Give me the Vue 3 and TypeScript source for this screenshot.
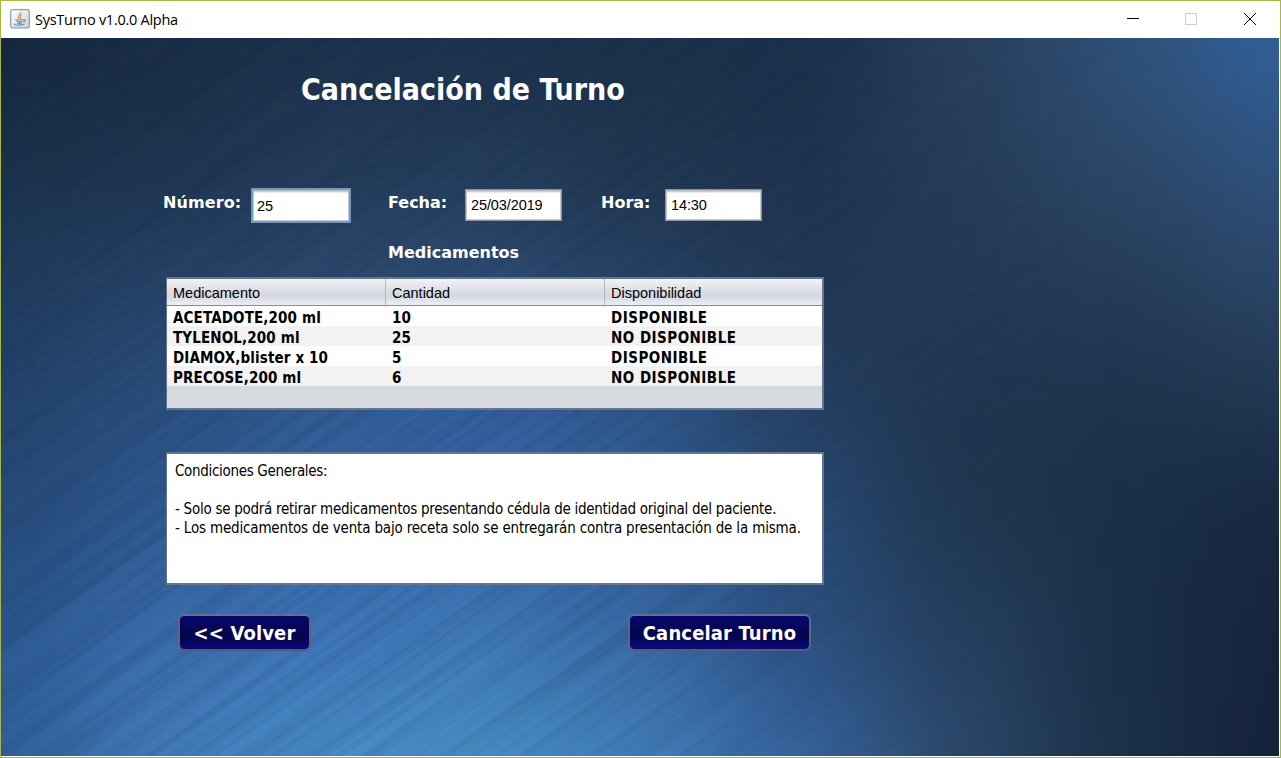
<script setup lang="ts">
interface Medicine {
  name: string
  amount: number
  status: string
}

const medicines: Medicine[] = [
  { name: 'ACETADOTE,200 ml', amount: 10, status: 'DISPONIBLE' },
  { name: 'TYLENOL,200 ml', amount: 25, status: 'NO DISPONIBLE' },
  { name: 'DIAMOX,blister x 10', amount: 5, status: 'DISPONIBLE' },
  { name: 'PRECOSE,200 ml', amount: 6, status: 'NO DISPONIBLE' },
]

// Colour samples of the backdrop, softened into one another by a blur.
const backdrop: string[][] = [
  ['#15263c', '#1a2c45', '#1c304a', '#1b304b', '#1b3049', '#1b2f4b', '#293f5c', '#2e5079', '#32619c'],
  ['#1a3049', '#1d334d', '#223a57', '#233c58', '#20364f', '#1d324d', '#263d5a', '#2c4868', '#2e5280'],
  ['#203c5c', '#264265', '#2c4768', '#2e4a70', '#273f60', '#213854', '#233955', '#253c58', '#2b4667'],
  ['#22426a', '#2a4e7c', '#305a90', '#3560a0', '#2f5688', '#263f60', '#1f3550', '#1c324d', '#213650'],
  ['#264a78', '#305b92', '#3768a8', '#3768ac', '#32609a', '#274a74', '#20374f', '#1a2e48', '#16273f'],
  ['#2b5890', '#3a6cad', '#3d74b8', '#3f79b6', '#3969a4', '#2b4f80', '#25405f', '#1b2e48', '#14243b'],
  ['#31609a', '#437dbb', '#4a8ec8', '#4a90c6', '#4280ba', '#3865a0', '#2b4868', '#1b2f49', '#14223a'],
]

const tiles = backdrop.flatMap((row, r) =>
  row.map((fill, c) => ({
    key: `${r}-${c}`,
    fill,
    x: c === 0 ? -300 : c * 160 - 80,
    y: r === 0 ? -300 : r * 120 - 60,
    w: c === 0 ? 381 : c === 8 ? 460 : 161,
    h: r === 0 ? 361 : r === 6 ? 400 : 121,
  })),
)
</script>

<template>
  <div class="window">
    <header class="titlebar">
      <svg class="app-icon" width="20" height="20" viewBox="0 0 20 20">
        <defs>
          <linearGradient id="tile" x1="0" y1="0" x2="1" y2="1">
            <stop offset="0" stop-color="#fff" />
            <stop offset="1" stop-color="#c9d3dd" />
          </linearGradient>
        </defs>
        <rect x=".7" y=".7" width="18.6" height="18.2" rx="2" fill="url(#tile)" stroke="#8ea2b3" stroke-width="1.3" />
        <path d="M10.6 3c.8 2-3.2 2.900-2.300 5 .3.800 1 1.200 1.300 2M12 5.500c-2.200 1.300-2.300 2-1.400 3.200.3.500 0 1-.4 1.500" fill="none" stroke="#e8995a" stroke-width="1.300" />
        <path d="M6 10.500c-1.500.700 6 .800 7.500 0M6.700 12.300c1.500.700 4.200.600 5.700 0M7.200 13.900c1.300.600 3.300.500 4.600 0M13.500 10.700c2.500-.5 2 2-.4 2.500M4.800 14.800c-2.800 1.300 6.500 2 9.600.2" fill="none" stroke="#6f8ea9" stroke-width="1.100" />
      </svg>
      <span class="app-name">SysTurno v1.0.0 Alpha</span>
      <svg class="controls" width="124" height="14" viewBox="0 0 124 14" fill="none" shape-rendering="crispEdges">
        <path d="M0 6.500h12" stroke="#000" />
        <rect x="58.500" y="1.500" width="11" height="11" stroke="#ccc" />
        <path d="M117 1l12 12M129 1l-12 12" stroke="#000" shape-rendering="auto" />
      </svg>
    </header>

    <main class="content">
      <svg class="backdrop" width="1278" height="718" viewBox="0 0 1278 718">
        <defs>
          <filter id="soften" filterUnits="userSpaceOnUse" x="-300" y="-300" width="1900" height="1400" color-interpolation-filters="sRGB">
            <feGaussianBlur stdDeviation="55" />
          </filter>
        </defs>
        <g filter="url(#soften)">
          <rect v-for="t in tiles" :key="t.key" :x="t.x" :y="t.y" :width="t.w" :height="t.h" :fill="t.fill" />
        </g>
      </svg>
      <div class="streak-mask">
        <svg class="streaks" width="1700" height="1500">
          <filter id="brushed" x="0" y="0" width="100%" height="100%" color-interpolation-filters="sRGB">
            <feTurbulence type="fractalNoise" baseFrequency="0.002 0.11" numOctaves="3" seed="7" />
            <feColorMatrix values="0 0 0 0 0.04  0 0 0 0 0.13  0 0 0 0 0.28  1.600 0 0 0 -0.62" />
          </filter>
          <rect width="1700" height="1500" filter="url(#brushed)" />
        </svg>
      </div>

      <div class="form">
        <h1>Cancelación de Turno</h1>
        <div class="fields">
          <label class="number">Número:</label>
          <div class="input focused">25</div>
          <label class="date">Fecha:</label>
          <div class="input">25/03/2019</div>
          <label class="time">Hora:</label>
          <div class="input">14:30</div>
        </div>
        <h2>Medicamentos</h2>
        <div class="table">
          <div class="row head">
            <span>Medicamento</span><span>Cantidad</span><span>Disponibilidad</span>
          </div>
          <div v-for="m in medicines" :key="m.name" class="row">
            <span>{{ m.name }}</span><span>{{ m.amount }}</span><span class="status">{{ m.status }}</span>
          </div>
        </div>
        <div class="terms">
          <p>Condiciones Generales:</p>
          <p class="first">- Solo se podrá retirar medicamentos presentando cédula de identidad original del paciente.</p>
          <p class="second">- Los medicamentos de venta bajo receta solo se entregarán contra presentación de la misma.</p>
        </div>
        <div class="actions">
          <button class="back">&lt;&lt; Volver</button>
          <button class="cancel">Cancelar Turno</button>
        </div>
      </div>
    </main>
  </div>
</template>

<style>
body {
  margin: 0;
  overflow: hidden;
}
</style>

<style scoped>
.window {
  box-sizing: border-box;
  width: 1281px;
  height: 758px;
  border: 1px solid #abb744;
  background: #fff;
  font-family: "DejaVu Sans Condensed", "DejaVu Sans", sans-serif;
  font-stretch: condensed;
}
.titlebar {
  display: flex;
  align-items: center;
  height: 37px;
  padding-left: 9px;
}
.app-icon {
  margin: 0 5px 2px 0;
}
.app-name {
  font: 14.500px/20px "Open Sans", sans-serif;
  letter-spacing: -0.27px;
  color: #000;
}
.controls {
  margin-left: auto;
  margin-right: 29px;
  margin-bottom: 1px;
  overflow: visible;
}
.content {
  position: relative;
  width: 1278px;
  height: 718px;
  overflow: hidden;
}
.backdrop {
  position: absolute;
  inset: 0;
}
.streak-mask {
  position: absolute;
  inset: 0;
  overflow: hidden;
  opacity: 0.2;
  -webkit-mask-image: linear-gradient(100deg, #000 50%, transparent 80%);
  mask-image: linear-gradient(100deg, #000 50%, transparent 80%);
}
.streaks {
  position: absolute;
  left: -210px;
  top: -390px;
  transform: rotate(-35deg);
}
.form {
  position: relative;
  width: 658px;
  padding-left: 165px;
}
h1 {
  margin: 0;
  padding: 33px 0 0 135px;
  font-size: 30px;
  line-height: 38px;
  color: #fff;
  white-space: nowrap;
}
.fields {
  display: flex;
  align-items: center;
  height: 36px;
  margin: 78px 0 0 -3px;
}
label,
h2 {
  font: bold 16px/20px "DejaVu Sans", sans-serif;
  color: #fff;
}
label {
  flex: none;
  margin-bottom: 5px;
}
.number { width: 88px; letter-spacing: 0.1px; }
.date { width: 77px; margin-left: 37px; }
.time { width: 64px; margin-left: 39px; }
.input {
  box-sizing: border-box;
  flex: none;
  width: 97px;
  height: 32px;
  padding-left: 5px;
  border: 1px solid #8f949c;
  background: #fff;
  box-shadow: inset 0 2px 2px #bbb, inset 0 0 0 1px #ccc;
  font: 14.500px/31px "Liberation Sans", Arial, sans-serif;
  letter-spacing: -0.1px;
  color: #000;
}
.focused {
  width: 100px;
  height: 35px;
  padding-left: 4px;
  border: 2px solid #6f9cc6;
  line-height: 32px;
}
h2 {
  margin: 20px 0 0 222px;
}
.table,
.terms {
  box-sizing: border-box;
  width: 658px;
  height: 133px;
  border: 2px solid #64768e;
  border-left-width: 1px;
}
.table {
  margin-top: 14px;
  background: #d6d9e0;
}
.row {
  display: grid;
  grid-template-columns: 219px 219px 1fr;
  height: 20px;
  background: #fff;
  font-size: 15px;
  font-weight: bold;
  line-height: 24px;
  letter-spacing: 0.13px;
  color: #000;
}
.row span {
  padding-left: 6px;
  white-space: nowrap;
}
.row .status {
  letter-spacing: 0.48px;
}
.row:nth-child(odd) {
  background: #f2f2f2;
}
.row.head {
  box-sizing: border-box;
  height: 27px;
  border-bottom: 1px solid #858b9a;
  background: linear-gradient(#f3f3f8, #dcdee4 45%, #d5d8df 65%, #eceff7);
  font: 14.500px/28px "Liberation Sans", Arial, sans-serif;
  letter-spacing: 0;
}
.head span + span {
  box-shadow: -1px 0 #b4b8c2;
}
.terms {
  margin-top: 42px;
  padding: 8px 0 0 8px;
  background: #fff;
  font-size: 15px;
  line-height: 19px;
  color: #000;
}
.terms p {
  margin: 0;
  letter-spacing: -0.32px;
  white-space: nowrap;
}
.terms .first {
  margin-top: 19px;
  letter-spacing: -0.27px;
}
.terms .second {
  letter-spacing: -0.17px;
}
.actions {
  display: flex;
  justify-content: space-between;
  padding: 29px 13px 0 12px;
}
button {
  box-sizing: border-box;
  height: 37px;
  padding: 0;
  border: 2px solid #65709a;
  border-color: #666f90 #5c6488 #555b78;
  border-radius: 6px;
  background: linear-gradient(#08086c, #05054e 60%, #0a0a78) padding-box;
  font: bold 20px/30px "DejaVu Sans Condensed", "DejaVu Sans", sans-serif;
  letter-spacing: 0.15px;
  color: #fff;
  white-space: nowrap;
}
.back { width: 133px; }
.cancel { width: 183px; }
</style>
